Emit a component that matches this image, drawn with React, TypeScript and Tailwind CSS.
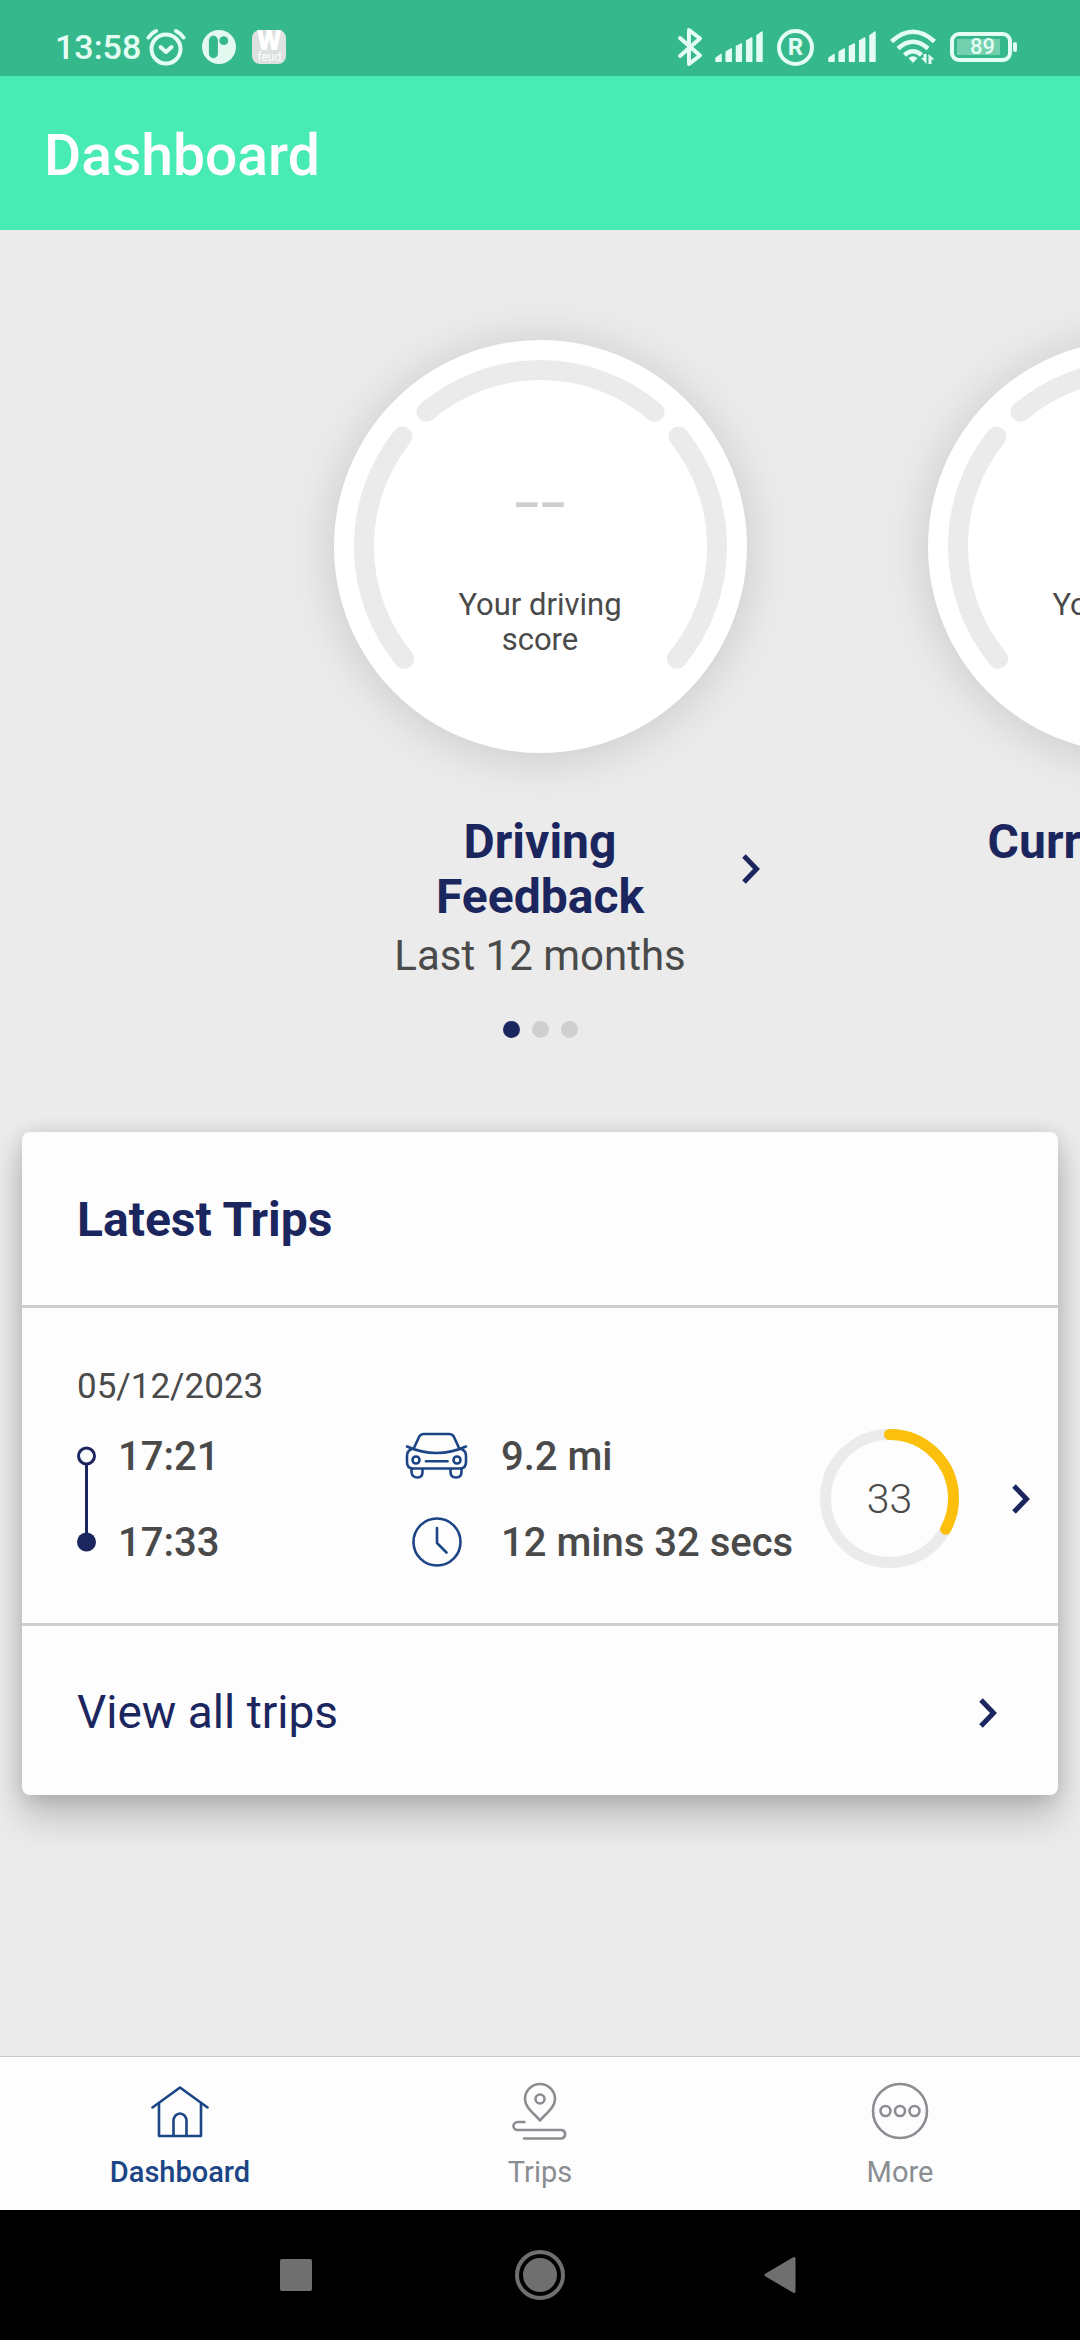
import React from "react";

const slides = [
  { title: "Driving Feedback", period: "Last 12 months", caption: "Your driving score", value: "--" },
  { title: "Current Week", period: "", caption: "Your driving score", value: "" },
];

const tabs = [
  { label: "Dashboard", icon: HomeIcon, active: true },
  { label: "Trips", icon: TripsIcon, active: false },
  { label: "More", icon: MoreIcon, active: false },
];

function Chevron({ className = "" }: { className?: string }) {
  return (
    <svg className={`h-[30px] w-[18px] shrink-0 ${className}`} viewBox="0 0 18 30" fill="none" stroke="#1b265f" strokeWidth="5" aria-hidden="true">
      <path d="M2 2 L14.5 15 L2 28" />
    </svg>
  );
}

function AlarmIcon() {
  return (
    <svg className="h-10 w-10" viewBox="0 0 40 40" fill="none" stroke="#e3fdf3" strokeWidth="4" strokeLinecap="round" strokeLinejoin="round" aria-hidden="true">
      <circle cx="20" cy="22" r="14.5" />
      <path d="M14.5 20 L20 25 L25.5 20" />
      <path d="M2.5 10.5 Q5.500 6 10 4" />
      <path d="M37.500 10.500 Q34.500 6 30 4" />
    </svg>
  );
}

function RoundAppIcon() {
  return (
    <svg className="h-[34px] w-[34px]" viewBox="0 0 32 32" aria-hidden="true">
      <circle cx="16" cy="16" r="16" fill="#e3f9f0" />
      <rect x="6.500" y="5.500" width="8.500" height="21" rx="4.200" fill="#35b98c" />
      <circle cx="20.500" cy="10" r="4.200" fill="#35b98c" />
    </svg>
  );
}

function BluetoothIcon() {
  return (
    <svg className="h-10 w-[26px]" viewBox="0 0 26 40" fill="none" stroke="#e3fdf3" strokeWidth="4" strokeLinecap="round" strokeLinejoin="round" aria-hidden="true">
      <path d="M3 11 L23 28.500 L12 37 V3 L23 11.500 L3 29" />
    </svg>
  );
}

function SignalIcon() {
  return (
    <svg className="h-8 w-12" viewBox="0 0 48 32" fill="#e3fdf3" stroke="#e3fdf3" strokeWidth="1.500" strokeLinejoin="round" aria-hidden="true">
      <path d="M1 30.200 V27 L6 23.500 V30.200 Z" />
      <path d="M11.200 30.200 V21 L16.200 18 V30.200 Z" />
      <path d="M21.500 30.200 V15.500 L26.300 13 V30.200 Z" />
      <path d="M31.700 30.200 V9.800 L36.700 7 V30.200 Z" />
      <path d="M42 30.200 V4.500 L47 1 V30.200 Z" />
    </svg>
  );
}

function WifiIcon() {
  return (
    <svg className="h-9 w-[46px]" viewBox="0 0 46 36" fill="none" stroke="#e3fdf3" strokeWidth="4.500" aria-hidden="true">
      <path d="M1.500 12.500 Q23 -7 44.500 12.500" />
      <path d="M8 19.500 Q23 6 38 19.500" />
      <path d="M14.500 26 Q23 18.500 31.500 26" />
      <path d="M18.500 29 Q23 25.500 27.500 29 L23 34 Z" fill="#e3fdf3" stroke="none" />
      <path d="M31 29 H33.500 V25 H36.500 V35 Z M38.500 25 L44.500 30.500 H41.500 V35 H38.500 Z" fill="#e3fdf3" stroke="none" />
    </svg>
  );
}

function Battery() {
  return (
    <div className="flex items-center gap-px">
      <div className="flex h-[30px] w-[62px] items-center rounded-[9px] border-4 border-[#e3fdf3] px-[3px]">
        <div className="flex h-4 w-[43px] items-center justify-center bg-[#72d0af] pl-2 text-[22px] leading-none font-medium">89</div>
      </div>
      <div className="h-[10px] w-1 rounded-sm bg-[#e3fdf3]" />
    </div>
  );
}

function StatusBar() {
  return (
    <div className="flex h-[76px] items-center justify-between bg-[#35b98c] pt-[18px] pr-[63px] pl-[55px] text-[#e3fdf3]">
      <div className="flex items-center">
        <span className="text-[34px] leading-10 font-medium">13:58</span>
        <div className="ml-[5px] flex items-center gap-4">
          <AlarmIcon />
          <RoundAppIcon />
          <div className="flex h-[34px] w-[34px] flex-col items-center rounded-[8px] bg-[#dde1df] font-black text-white">
            <span className="text-[28px] leading-[22px]">W</span>
            <span className="text-[12px] leading-[11px] font-normal">feud</span>
          </div>
        </div>
      </div>
      <div className="flex items-center gap-[14px]">
        <div className="flex items-center gap-3">
          <BluetoothIcon />
          <SignalIcon />
        </div>
        <span className="flex h-[37px] w-[37px] items-center justify-center rounded-full border-4 border-[#e3fdf3] text-[24px] leading-none font-bold">R</span>
        <SignalIcon />
        <WifiIcon />
        <Battery />
      </div>
    </div>
  );
}

function Gauge({ value, caption }: { value: string; caption: string }) {
  return (
    <div className="relative h-[413px] w-[413px] rounded-full bg-white shadow-[0_4px_44px_4px_rgba(0,0,0,0.13)]">
      <svg className="absolute inset-0 h-full w-full" viewBox="-206.500 -206.500 413 413" fill="none" stroke="#ebebeb" strokeWidth="20" strokeLinecap="round" aria-hidden="true">
        <path d="M-114 -134.700 A176.500 176.500 0 0 1 114 -134.700" />
        <path d="M-136.300 112.300 A176.500 176.500 0 0 1 -138 -110" />
        <path d="M138 -110 A176.500 176.500 0 0 1 136.300 112.300" />
      </svg>
      <div className="relative flex flex-col items-center pt-[111px]">
        <div className="h-[104px] text-[92px] leading-[104px] font-light text-[#cfcfcf]">{value}</div>
        <p className="mt-8 w-[190px] text-center text-[31px] leading-[35px] text-[#4a4a4a]">{caption}</p>
      </div>
    </div>
  );
}

function Carousel() {
  return (
    <section aria-label="Scores">
      <div className="overflow-hidden">
        <div className="flex pt-[110px] pl-[calc(50%-297px)]">
          {slides.map((s) => (
            <article key={s.title} className="flex w-[594px] shrink-0 flex-col items-center">
              <Gauge value={s.value} caption={s.caption} />
              <a href="#feedback" className="mt-[61px] grid w-full grid-cols-[1fr_300px_1fr] items-center">
                <h2 className="col-start-2 text-center text-[48px] leading-[55px] font-bold text-[#1b265f]">{s.title}</h2>
                <Chevron className="ml-[52px]" />
              </a>
              <p className="mt-2 text-[42px] leading-[48px] text-[#4a4a4a]">{s.period}</p>
            </article>
          ))}
        </div>
      </div>
      <div className="mt-[41px] flex justify-center gap-3">
        <button aria-label="Page 1" className="h-[17px] w-[17px] rounded-full bg-[#1b265f]" />
        <button aria-label="Page 2" className="h-[17px] w-[17px] rounded-full bg-[#cfcfcf]" />
        <button aria-label="Page 3" className="h-[17px] w-[17px] rounded-full bg-[#cfcfcf]" />
      </div>
    </section>
  );
}

function Timeline() {
  return (
    <svg className="h-[134px] w-[19px]" viewBox="0 0 19 134" aria-hidden="true">
      <path d="M9.500 30 V110" stroke="#1b265f" strokeWidth="3" />
      <circle cx="9.500" cy="24" r="8" fill="#fdfdfd" stroke="#1b265f" strokeWidth="3" />
      <circle cx="9.500" cy="110" r="9.500" fill="#1b265f" />
    </svg>
  );
}

function CarIcon() {
  return (
    <svg className="h-12 w-[63px]" viewBox="0 0 63 48" fill="none" stroke="#1c4585" strokeWidth="2.600" strokeLinecap="round" strokeLinejoin="round" aria-hidden="true">
      <path d="M8.500 17 L14 5 Q15.500 2 19 2 H44 Q47.500 2 49 5 L54.500 17" />
      <path d="M2 14.500 Q31.500 27.500 61 14.500" />
      <path d="M6 17.500 Q2 19 2 24 V30 Q2 36.500 8 36.500 H55 Q61 36.500 61 30 V24 Q61 19 57 17.500" />
      <circle cx="11" cy="28" r="3.500" />
      <circle cx="52" cy="28" r="3.500" />
      <path d="M21 29.300 H42.500" />
      <path d="M6.500 37 V40 Q7 45.500 12.500 45.500 Q17.500 45.500 17.500 40 V37 M45.500 37 V40 Q45.500 45.500 51 45.500 Q56.500 45.500 56.500 40 V37" />
    </svg>
  );
}

function ClockIcon() {
  return (
    <svg className="h-[50px] w-[50px]" viewBox="0 0 50 50" fill="none" stroke="#1c4585" strokeWidth="2.600" strokeLinecap="round" strokeLinejoin="round" aria-hidden="true">
      <circle cx="25" cy="25" r="23.500" />
      <path d="M25 11 V26 L34.500 35.500" />
    </svg>
  );
}

function ScoreRing({ score }: { score: number }) {
  return (
    <div className="relative flex h-[139px] w-[139px] items-center justify-center">
      <svg className="absolute inset-0 h-full w-full -rotate-90" viewBox="0 0 139 139" fill="none" strokeWidth="11" aria-hidden="true">
        <circle cx="69.500" cy="69.500" r="64" stroke="#ebebeb" />
        <circle cx="69.500" cy="69.500" r="64" stroke="#fcc00c" strokeLinecap="round" pathLength={100} strokeDasharray={`${score} 200`} />
      </svg>
      <span className="relative text-[41px] leading-[48px] font-light text-[#4a4a4a]">{score}</span>
    </div>
  );
}

function LatestTrips() {
  return (
    <section className="mx-[22px] mt-[94px] rounded-[8px] bg-[#fdfdfd] shadow-[0_22px_36px_rgba(0,0,0,0.2),0_2px_20px_rgba(0,0,0,0.14)]">
      <h2 className="px-[55px] pt-[60px] pb-[57px] text-[48px] leading-[56px] font-bold text-[#1b265f]">Latest Trips</h2>
      <a href="#trip" className="block border-y-[3px] border-[#cfcfcf] pt-[59px] pr-7 pb-[55px] pl-[55px] text-[#4a4a4a]">
        <p className="text-[35px] leading-10">05/12/2023</p>
        <div className="mt-[22px] grid grid-cols-[19px_1fr_63px_352px_139px_71px] items-center text-[40px] leading-[48px] font-medium">
          <Timeline />
          <div className="flex flex-col gap-[38px] pt-[3px] pl-[22px]">
            <span>17:21</span>
            <span>17:33</span>
          </div>
          <div className="flex flex-col items-center gap-[38px]">
            <div className="flex h-12 items-center"><CarIcon /></div>
            <div className="flex h-12 items-center"><ClockIcon /></div>
          </div>
          <div className="flex flex-col gap-[38px] pt-[3px] pl-[33px] whitespace-nowrap">
            <span>9.2 mi</span>
            <span>12 mins 32 secs</span>
          </div>
          <ScoreRing score={33} />
          <Chevron className="justify-self-end" />
        </div>
      </a>
      <a href="#trips" className="flex items-center justify-between pt-[60px] pr-[61px] pb-[56px] pl-[55px] text-[46px] leading-[53px] text-[#1b265f]">
        View all trips
        <Chevron />
      </a>
    </section>
  );
}

function HomeIcon() {
  return (
    <svg className="h-[58px] w-[58px]" viewBox="0 0 58 58" fill="none" stroke="currentColor" strokeWidth="2.600" strokeLinecap="round" strokeLinejoin="round" aria-hidden="true">
      <path d="M1.500 25.500 L29 5.500 L56.500 25.500" />
      <path d="M8 21.500 V54 H50 V21.500" />
      <path d="M22.500 54 V39 A6.500 7.500 0 0 1 35.500 39 V54" />
    </svg>
  );
}

function TripsIcon() {
  return (
    <svg className="h-[58px] w-[58px]" viewBox="0 0 58 58" fill="none" stroke="currentColor" strokeWidth="2.600" strokeLinecap="round" strokeLinejoin="round" aria-hidden="true">
      <path d="M29 38.500 C24 32 14 26 14 17 A15 15 0 0 1 44 17 C44 26 34 32 29 38.500 Z" />
      <circle cx="29" cy="17" r="4.500" />
      <path d="M13.500 40 H6.500 A4 4 0 0 0 6.500 48 H50.500 A4.300 4.300 0 0 1 50.500 56.500 H13" />
    </svg>
  );
}

function MoreIcon() {
  return (
    <svg className="h-[58px] w-[58px]" viewBox="0 0 58 58" fill="none" stroke="currentColor" strokeWidth="2.600" aria-hidden="true">
      <circle cx="29" cy="29" r="27" />
      <circle cx="14.500" cy="29" r="5" />
      <circle cx="29" cy="29" r="5" />
      <circle cx="43.500" cy="29" r="5" />
    </svg>
  );
}

function TabBar() {
  return (
    <nav className="grid grid-cols-3 border-t border-[#c8c8c8] bg-[#fdfdfd]">
      {tabs.map(({ label, icon: Icon, active }) => (
        <a
          key={label}
          href={`#${label.toLowerCase()}`}
          className={`flex flex-col items-center gap-[15px] pt-[25px] pb-5 text-[29px] leading-[35px] ${active ? "font-medium text-[#1c4585]" : "text-[#8a8e92]"}`}
        >
          <Icon />
          {label}
        </a>
      ))}
    </nav>
  );
}

function SystemBar() {
  return (
    <div className="flex h-[130px] items-center justify-center gap-[194px] bg-black">
      <button aria-label="Recent apps" className="flex h-[50px] w-[50px] items-center justify-center">
        <span className="h-8 w-8 rounded-[2px] bg-[#6f6f6f]" />
      </button>
      <button aria-label="Home" className="flex h-[50px] w-[50px] items-center justify-center rounded-full border-4 border-[#6f6f6f]">
        <span className="h-[34px] w-[34px] rounded-full bg-[#6f6f6f]" />
      </button>
      <button aria-label="Back" className="flex h-[50px] w-[50px] items-center">
        <svg className="ml-1 h-[38px] w-9" viewBox="0 0 36 38" fill="#6f6f6f" stroke="#6f6f6f" strokeWidth="3" strokeLinejoin="round" aria-hidden="true">
          <path d="M3 19 L31 2.500 V35.500 Z" />
        </svg>
      </button>
    </div>
  );
}

export default function App() {
  return (
    <div className="flex min-h-screen flex-col bg-[#ebebeb] font-['Roboto',sans-serif]">
      <StatusBar />
      <header className="bg-[#49ebb4] px-11 pt-[47px] pb-[41px]">
        <h1 className="text-[57px] leading-[66px] font-medium text-white">Dashboard</h1>
      </header>
      <main className="flex-1 pb-16">
        <Carousel />
        <LatestTrips />
      </main>
      <TabBar />
      <SystemBar />
    </div>
  );
}
